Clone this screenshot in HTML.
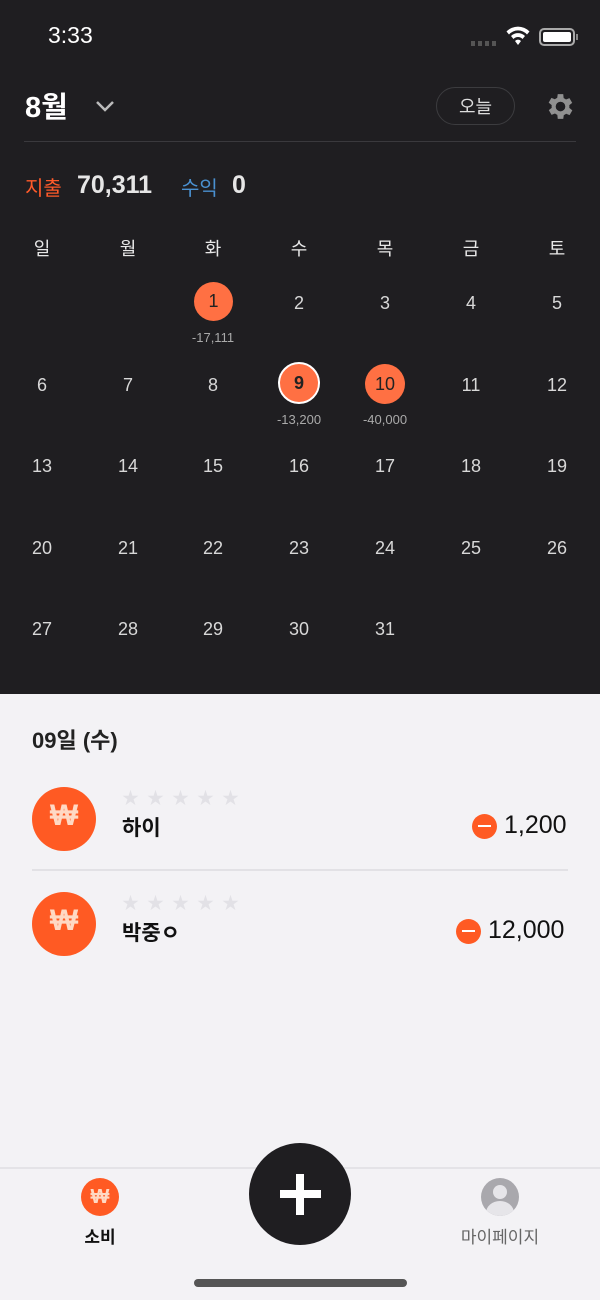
<!DOCTYPE html>
<html><head><meta charset="utf-8"><style>
*{margin:0;padding:0;box-sizing:border-box}
body{width:600px;height:1300px;position:relative;background:#f3f2f5;font-family:"Liberation Sans","Noto Sans CJK KR",sans-serif;overflow:hidden}
.a{position:absolute}
.dark{position:absolute;left:0;top:0;width:600px;height:694px;background:#1f1e21}
.c{position:absolute;width:86px;text-align:center;transform:translateX(-43px)}
.d{font-size:18px;color:#d8d8d8;line-height:20px}
.h{font-size:18px;color:#e8e8e8}
.amt{font-size:13px;color:#aaa}
.circ{position:absolute;border-radius:50%;background:#ff7043;color:#222;text-align:center;font-size:18px}
.won{position:absolute;width:64px;height:64px;border-radius:50%;background:#ff5a23}
.star{color:#e2e1e6;font-size:17px;letter-spacing:8px}
</style></head><body>
<div class="dark"></div>
<div class="a" style="left:48px;top:22px;font-size:23px;color:#fff">3:33</div>
<div class="a" style="left:471px;top:41px;width:26px;height:5px;background:repeating-linear-gradient(90deg,#555 0 4px,transparent 4px 7px)"></div>
<svg class="a" style="left:505px;top:26px" width="26" height="20" viewBox="0 0 26 20"><path d="M13 19l3-4a4 4 0 0 0-6 0z M6 10a10 10 0 0 1 14 0l-2.5 3a6 6 0 0 0-9 0z M1.5 5.5a16 16 0 0 1 23 0l-2.5 3a12 12 0 0 0-18 0z" fill="#fff"/></svg>
<div class="a" style="left:539px;top:28px;width:36px;height:18px;border:2px solid #aaa;border-radius:5px;padding:2px"><div style="width:100%;height:100%;background:#fff;border-radius:2px"></div></div>
<div class="a" style="left:576px;top:34px;width:2px;height:6px;background:#888"></div>
<div class="a" style="left:25px;top:84px;font-size:29px;font-weight:bold;color:#fff">8월</div>
<svg class="a" style="left:95px;top:99px" width="20" height="14"><path d="M2 3l8 8 8-8" stroke="#bbb" stroke-width="2.5" fill="none"/></svg>
<div class="a" style="left:436px;top:87px;width:79px;height:38px;border:1.5px solid #3c3c3f;border-radius:19px;color:#ddd;font-size:18px;text-align:center;line-height:36px;padding-top:1px">오늘</div>
<svg class="a" style="left:544px;top:90px" width="33" height="33" viewBox="0 0 24 24"><path fill="#909090" d="M19.4 13a7.5 7.5 0 0 0 0-2l2.1-1.6-2-3.5-2.5 1a7 7 0 0 0-1.7-1L15 3h-4l-.4 2.7a7 7 0 0 0-1.7 1l-2.5-1-2 3.5L6.6 11a7.5 7.5 0 0 0 0 2l-2.1 1.6 2 3.5 2.5-1a7 7 0 0 0 1.7 1L11 21h4l.4-2.7a7 7 0 0 0 1.7-1l2.5 1 2-3.5zM13 15.5a3.5 3.5 0 1 1 0-7 3.5 3.5 0 0 1 0 7z" transform="translate(-1 0)"/></svg>
<div class="a" style="left:24px;top:141px;width:552px;height:1px;background:#3a393d"></div>
<div class="a" style="left:25px;top:172px;font-size:20px;color:#ff5a2a">지출</div>
<div class="a" style="left:77px;top:171px;font-size:25px;font-weight:bold;color:#e6e6e6">70,311</div>
<div class="a" style="left:181px;top:172px;font-size:20px;color:#4a90d0">수익</div>
<div class="a" style="left:232px;top:171px;font-size:25px;font-weight:bold;color:#e6e6e6">0</div>

<div class="c h" style="left:42px;top:235px">일</div><div class="c h" style="left:128px;top:235px">월</div><div class="c h" style="left:213px;top:235px">화</div><div class="c h" style="left:299px;top:235px">수</div><div class="c h" style="left:385px;top:235px">목</div><div class="c h" style="left:471px;top:235px">금</div><div class="c h" style="left:557px;top:235px">토</div>

<div class="circ" style="left:194px;top:282px;width:39px;height:39px;line-height:39px">1</div>
<div class="circ" style="left:278px;top:362px;width:42px;height:42px;line-height:38px;border:2.5px solid #fff;font-weight:bold">9</div>
<div class="circ" style="left:365px;top:364px;width:40px;height:40px;line-height:40px">10</div>
<div class="c amt" style="left:213px;top:330px">-17,111</div>
<div class="c amt" style="left:299px;top:412px">-13,200</div>
<div class="c amt" style="left:385px;top:412px">-40,000</div>

<div class="c d" style="left:299px;top:293px">2</div><div class="c d" style="left:385px;top:293px">3</div><div class="c d" style="left:471px;top:293px">4</div><div class="c d" style="left:557px;top:293px">5</div>
<div class="c d" style="left:42px;top:375px">6</div><div class="c d" style="left:128px;top:375px">7</div><div class="c d" style="left:213px;top:375px">8</div><div class="c d" style="left:471px;top:375px">11</div><div class="c d" style="left:557px;top:375px">12</div>
<div class="c d" style="left:42px;top:456px">13</div><div class="c d" style="left:128px;top:456px">14</div><div class="c d" style="left:213px;top:456px">15</div><div class="c d" style="left:299px;top:456px">16</div><div class="c d" style="left:385px;top:456px">17</div><div class="c d" style="left:471px;top:456px">18</div><div class="c d" style="left:557px;top:456px">19</div>
<div class="c d" style="left:42px;top:538px">20</div><div class="c d" style="left:128px;top:538px">21</div><div class="c d" style="left:213px;top:538px">22</div><div class="c d" style="left:299px;top:538px">23</div><div class="c d" style="left:385px;top:538px">24</div><div class="c d" style="left:471px;top:538px">25</div><div class="c d" style="left:557px;top:538px">26</div>
<div class="c d" style="left:42px;top:619px">27</div><div class="c d" style="left:128px;top:619px">28</div><div class="c d" style="left:213px;top:619px">29</div><div class="c d" style="left:299px;top:619px">30</div><div class="c d" style="left:385px;top:619px">31</div>

<div class="a" style="left:32px;top:723px;font-size:22px;font-weight:bold;color:#222">09일 (수)</div>

<div class="won" style="left:32px;top:787px"></div>
<div class="a" style="left:32px;top:799px;width:64px;text-align:center;font-size:30px;font-weight:bold;color:#ffd9c4">₩</div>
<div class="a star" style="left:122px;top:784px">★★★★★</div>
<div class="a" style="left:122px;top:812px;font-size:21px;font-weight:bold;color:#111">하이</div>
<div class="a" style="left:472px;top:814px;width:25px;height:25px;border-radius:50%;background:#ff5a23"><div style="margin:11px 6px 0;height:2px;background:#fff"></div></div>
<div class="a" style="left:504px;top:811px;font-size:25px;color:#111">1,200</div>
<div class="a" style="left:32px;top:869px;width:536px;height:1.5px;background:#e2e1e5"></div>

<div class="won" style="left:32px;top:892px"></div>
<div class="a" style="left:32px;top:904px;width:64px;text-align:center;font-size:30px;font-weight:bold;color:#ffd9c4">₩</div>
<div class="a star" style="left:122px;top:889px">★★★★★</div>
<div class="a" style="left:122px;top:917px;font-size:21px;font-weight:bold;color:#111">박중ㅇ</div>
<div class="a" style="left:456px;top:919px;width:25px;height:25px;border-radius:50%;background:#ff5a23"><div style="margin:11px 6px 0;height:2px;background:#fff"></div></div>
<div class="a" style="left:488px;top:916px;font-size:25px;color:#111">12,000</div>

<div class="a" style="left:0;top:1167px;width:600px;height:1.5px;background:#e4e3e7"></div>
<div class="a" style="left:81px;top:1178px;width:38px;height:38px;border-radius:50%;background:#ff5a23;color:#ffd9c4;font-size:20px;font-weight:bold;text-align:center;line-height:38px">₩</div>
<div class="a" style="left:80px;top:1223px;width:40px;text-align:center;font-size:17px;font-weight:bold;color:#111">소비</div>
<div class="a" style="left:249px;top:1143px;width:102px;height:102px;border-radius:50%;background:#1f1e21"></div>
<div class="a" style="left:296px;top:1174px;width:8px;height:41px;background:#fff"></div>
<div class="a" style="left:280px;top:1190px;width:41px;height:8px;background:#fff"></div>
<div class="a" style="left:481px;top:1178px;width:38px;height:38px;border-radius:50%;background:#a9a8ad;overflow:hidden"><div style="position:absolute;left:12px;top:7px;width:14px;height:14px;border-radius:50%;background:#e6e5e9"></div><div style="position:absolute;left:5px;top:23px;width:28px;height:24px;border-radius:50%;background:#e6e5e9"></div></div>
<div class="a" style="left:450px;top:1223px;width:100px;text-align:center;font-size:17px;color:#666">마이페이지</div>
<div class="a" style="left:194px;top:1279px;width:213px;height:8px;border-radius:4px;background:#555"></div>
</body></html>
